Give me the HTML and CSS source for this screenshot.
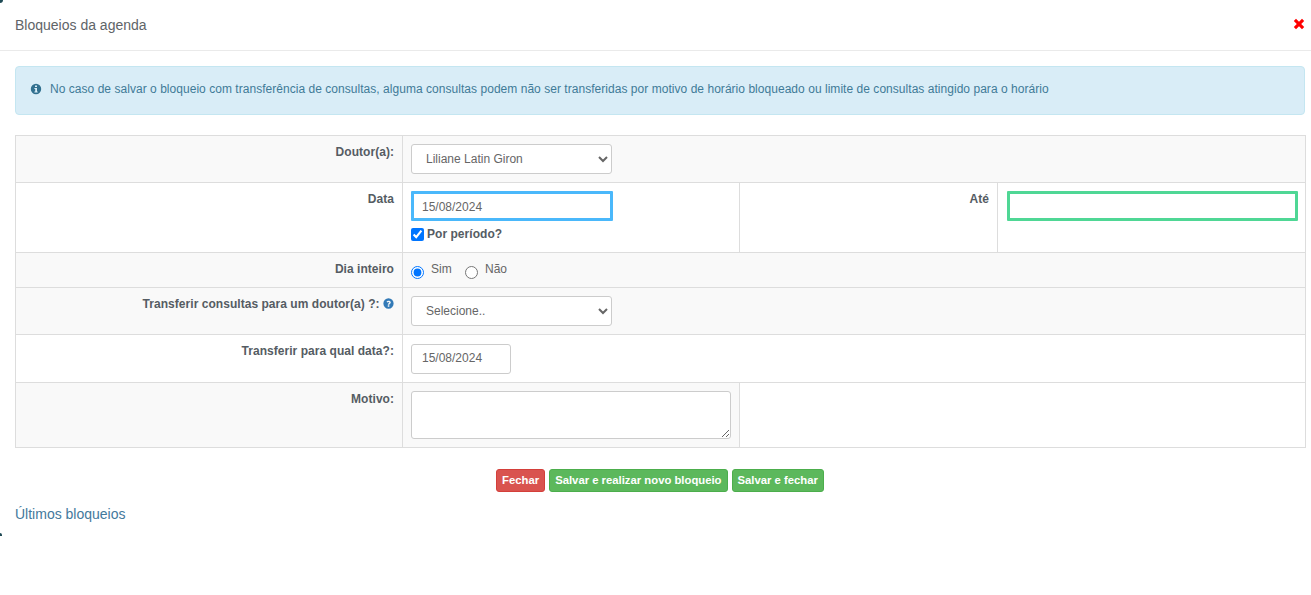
FILE: index.html
```html
<!DOCTYPE html>
<html lang="pt-BR">
<head>
<meta charset="utf-8">
<title>Bloqueios da agenda</title>
<link rel="stylesheet" href="styles.css">
</head>
<body>
<div class="modal">
  <span class="corner corner-top"></span>
  <span class="corner corner-bottom"></span>
  <header class="modal-header">
    <h4 class="modal-title">Bloqueios da agenda</h4>
    <svg class="close-icon" viewBox="0 0 12 12" aria-label="Fechar"><path d="M0.800 3 3 .8 6 3.800 9 .8 11.200 3 8.200 6 11.200 9 9 11.200 6 8.200 3 11.200 .8 9 3.800 6Z"/></svg>
  </header>
  <div class="modal-body">
    <div class="alert">
      <svg class="alert-icon" viewBox="0 0 12 12"><path fill-rule="evenodd" d="M6 .8a5.200 5.200 0 1 0 0 10.400A5.200 5.200 0 0 0 6 .8ZM5 2.400h2v1.700H5ZM4.400 5h2.600v3.500h.7v1.100H4.400V8.500h.8V6.100h-.8Z"/></svg>
      <span>No caso de salvar o bloqueio com transferência de consultas, alguma consultas podem não ser transferidas por motivo de horário bloqueado ou limite de consultas atingido para o horário</span>
    </div>
    <table class="form-table">
      <colgroup><col class="col-a"><col class="col-b"><col class="col-c"><col class="col-d"></colgroup>
      <tbody>
        <tr class="row-1 shaded">
          <th>Doutor(a):</th>
          <td colspan="3"><select class="field field-wide"><option>Liliane Latin Giron</option></select></td>
        </tr>
        <tr class="row-2">
          <th>Data</th>
          <td>
            <input class="field field-blue" type="text" value="15/08/2024">
            <label class="check"><input type="checkbox" checked> Por período?</label>
          </td>
          <th>Até</th>
          <td><input class="field field-green" type="text"></td>
        </tr>
        <tr class="row-3 shaded">
          <th>Dia inteiro</th>
          <td colspan="3" class="radios">
            <label class="radio"><input type="radio" name="dia" checked><span>Sim</span></label>
            <label class="radio"><input type="radio" name="dia"><span>Não</span></label>
          </td>
        </tr>
        <tr class="row-4 shaded">
          <th>Transferir consultas para um doutor(a) ?:
            <svg class="help-icon" viewBox="0 0 12 12"><path fill-rule="evenodd" d="M6 .4a5.600 5.600 0 1 0 0 11.200A5.600 5.600 0 0 0 6 .4ZM6.900 7.400H5.200c0-1.600 1.700-1.700 1.700-2.500 0-.9-1.500-.8-1.800 0l-1.300-.7C4.500 2.400 8.500 2.300 8.500 4.900c0 1.500-1.600 1.500-1.600 2.500ZM5.200 8h1.700v1.500H5.200Z"/></svg>
          </th>
          <td colspan="3"><select class="field field-wide"><option>Selecione..</option></select></td>
        </tr>
        <tr class="row-5">
          <th>Transferir para qual data?:</th>
          <td colspan="3" class="date-cell"><input class="field field-date" type="text" value="15/08/2024"></td>
        </tr>
        <tr class="row-6 shaded">
          <th>Motivo:</th>
          <td><textarea class="field field-text"></textarea></td>
          <td colspan="2" class="blank"></td>
        </tr>
      </tbody>
    </table>
    <div class="actions">
      <button class="btn btn-red" type="button">Fechar</button>
      <button class="btn btn-green" type="button">Salvar e realizar novo bloqueio</button>
      <button class="btn btn-green" type="button">Salvar e fechar</button>
    </div>
    <a class="last-link" href="#">Últimos bloqueios</a>
  </div>
</div>
</body>
</html>
```
FILE: styles.css
```css
* { box-sizing: border-box; }
html, body { margin: 0; padding: 0; background: #fff; }
body { font-family: "Liberation Sans", Arial, sans-serif; font-size: 12px; color: #555; height: 595px; overflow: hidden; }
.modal { position: relative; height: 536px; background: #fff; }
.corner { position: absolute; left: 0; background: #1f4a55; }
.corner-top { top: 0; width: 3px; height: 3px; border-bottom-right-radius: 3px; }
.corner-bottom { top: 533px; width: 2px; height: 3px; border-top-right-radius: 2px; }
.modal-header { height: 51px; border-bottom: 1px solid #eaeaea; padding: 0 6px 0 15px; display: flex; align-items: center; justify-content: space-between; }
.modal-title { margin: 0; font-size: 14px; font-weight: 400; color: #606468; line-height: 20px; }
.close-icon { width: 12px; height: 12px; fill: #f00; margin-top: -3px; }
.modal-body { padding: 15px 6px 0 15px; }
.alert { height: 49px; background: #d9edf7; border: 1px solid #c4e6f1; border-radius: 4px; color: #3f7b98; padding: 0 14px 3px; display: flex; align-items: center; gap: 8px; font-size: 12px; letter-spacing: .037px; margin-bottom: 20px; }
.alert-icon { width: 12px; height: 12px; fill: #31708f; flex: none; }
.form-table { width: 1290px; table-layout: fixed; border-collapse: collapse; border: 1px solid #ddd; }
.col-a { width: 387px; }
.col-b { width: 337px; }
.col-c { width: 258px; }
.col-d { width: 308px; }
.form-table th, .form-table td { border: 1px solid #ddd; padding: 8px; vertical-align: top; }
.form-table th { text-align: right; font-weight: 700; color: #555c63; line-height: 17px; letter-spacing: .04px; }
.form-table td { text-align: left; }
.shaded th, .shaded td { background: #f9f9f9; }
.row-1 { height: 47px; }
.row-2 { height: 70px; }
.row-3 { height: 35px; }
.row-4 { height: 47px; }
.row-5 { height: 48px; }
.row-6 { height: 65px; }
.form-table td.blank { background: #fff; }
.field { display: block; height: 30px; background: #fff; border: 1px solid #ccc; border-radius: 3px; font-family: inherit; font-size: 12px; color: #666; padding: 0 10px; margin: 0; outline: 0; }
.field-wide { width: 201px; }
.form-table td.date-cell { padding-top: 9px; }
.field-date { width: 100px; padding-bottom: 2px; }
.field-text { width: 320px; height: 48px; resize: both; }
.field-blue { width: 202px; border: 3px solid #4ab8fb; border-radius: 1px; padding: 1px 8px 0; }
.field-green { width: 291px; margin-left: 1px; border: 3px solid #4fd795; border-radius: 1px; }
.check { display: flex; align-items: center; gap: 3px; margin-top: 5px; font-weight: 700; color: #555c63; line-height: 17px; letter-spacing: .04px; }
.check input { margin: 0; width: 13px; height: 13px; }
.form-table td.radios { padding: 8px 8px 0; }
.radio { display: inline-flex; align-items: flex-start; margin-right: 10px; color: #666; }
.radio input { margin: 5px 7px 0 0; width: 13px; height: 13px; }
.radio span { line-height: 17px; }
.help-icon { width: 11px; height: 11px; fill: #337ab7; vertical-align: -1px; }
.actions { display: flex; justify-content: center; gap: 4px; margin-top: 21px; }
.btn { height: 23px; padding: 0 5px; border-radius: 3px; border: 1px solid transparent; font-family: inherit; font-size: 11.3px; font-weight: 700; color: #fff; line-height: 1; }
.btn-red { background: #d9534f; border-color: #d43f3a; }
.btn-green { background: #5cb85c; border-color: #4cae4c; }
.last-link { display: block; margin-top: 12px; font-size: 14px; line-height: 20px; color: #43799c; text-decoration: none; }
```
